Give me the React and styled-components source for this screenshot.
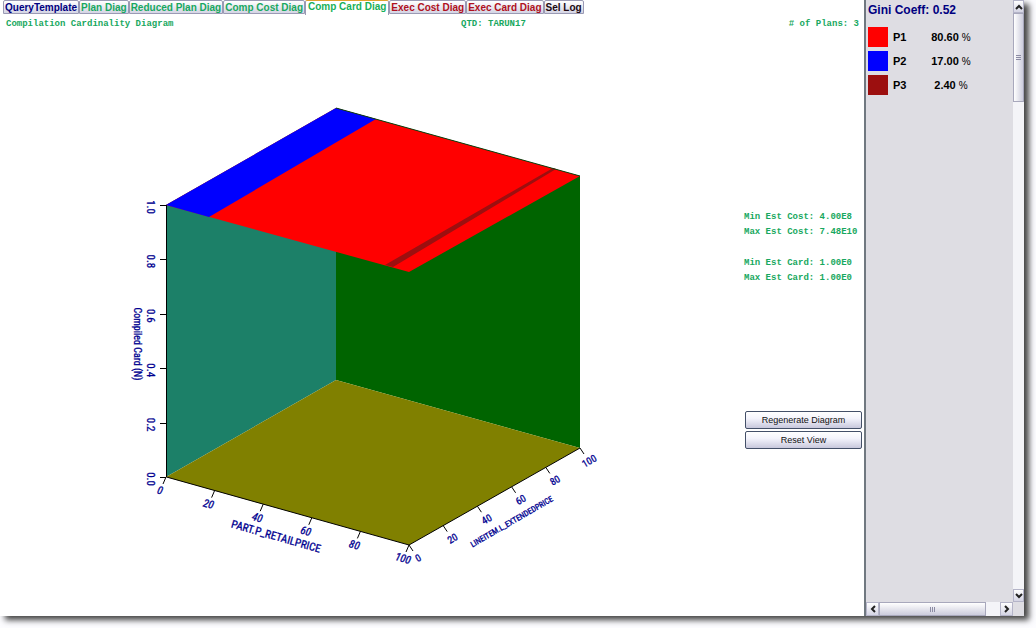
import React, { useState } from 'react';
import styled, { createGlobalStyle } from 'styled-components';

const tabs = [
  { label: 'QueryTemplate', color: '#000080' },
  { label: 'Plan Diag', color: '#18a860' },
  { label: 'Reduced Plan Diag', color: '#18a860' },
  { label: 'Comp Cost Diag', color: '#18a860' },
  { label: 'Comp Card Diag', color: '#18b058' },
  { label: 'Exec Cost Diag', color: '#b01020' },
  { label: 'Exec Card Diag', color: '#b01020' },
  { label: 'Sel Log', color: '#200810' },
];

const plans = [
  { name: 'P1', share: '80.60', color: '#ff0000' },
  { name: 'P2', share: '17.00', color: '#0000ff' },
  { name: 'P3', share: '2.40', color: '#9c0f0f' },
];

const heightTicks = ['1.0', '0.8', '0.6', '0.4', '0.2', '0.0'];
const floorTicks = ['0', '20', '40', '60', '80', '100'];

const Diagram = () => (
  <Plot viewBox="0 32 740 584" preserveAspectRatio="xMinYMin meet" role="img" aria-label="Compilation Cardinality Diagram">
    {/* walls and floor */}
    <polygon points="166,205 336,108 336,380 166,477" fill="#1c8068" />
    <polygon points="336,108 580,176 580,448 336,380" fill="#006400" />
    <polygon points="166,477 336,380 580,448 409,545" fill="#808000" />

    {/* plan regions on the top face */}
    <polygon points="166,205 336,108 580,176 409,272" fill="#ff0000" />
    <polygon points="166,205 336,108 376,119 209,217" fill="#0000ff" />
    <polygon points="385,265 553,168 556,169 458,228 393,267" fill="#9c0f0f" />
    <path d="M336 108L580 176" fill="none" stroke="#104010" strokeWidth="1" />

    <path d="M166.5 205V477L409 545L580 448" fill="none" stroke="#000" strokeWidth="1" />

    {heightTicks.map((label, i) => {
      const y = 205 + i * 54.4;
      return (
        <g key={label}>
          <path d={`M160 ${Math.round(y) + 0.5}h6`} stroke="#000" />
          <AxisText $size={11} transform={`translate(147 ${y + 2}) rotate(90)`}>{label}</AxisText>
        </g>
      );
    })}
    {floorTicks.map((label, i) => {
      const x = 166 + i * 48.6;
      const y = 477 + i * 13.6;
      return (
        <g key={label}>
          <path d={`M${x} ${y}l-3 7`} stroke="#000" />
          <AxisText $size={11} $slanted transform={`translate(${x - 7} ${y + 17}) rotate(16)`}>{label}</AxisText>
        </g>
      );
    })}
    {floorTicks.map((label, i) => {
      const x = 409 + i * 34.2;
      const y = 545 - i * 19.4;
      return (
        <g key={label}>
          <path d={`M${x} ${y}l4 6`} stroke="#000" />
          <AxisText $size={10} transform={`translate(${x + 11} ${y + 16}) rotate(-30)`}>{label}</AxisText>
        </g>
      );
    })}

    <AxisText $size={10} transform="translate(134 344) rotate(90)">Compiled Card (N)</AxisText>
    <AxisText $size={11} transform="translate(275 540) rotate(16)">PART.P_RETAILPRICE</AxisText>
    <AxisText $size={8} transform="translate(513 524) rotate(-30)">LINEITEM.L_EXTENDEDPRICE</AxisText>
  </Plot>
);

const Arrow = ({ turn }) => (
  <svg width="8" height="8" viewBox="0 0 8 8" aria-hidden="true">
    <path d="M1 6L4 3L7 6" fill="none" stroke="#222" strokeWidth="2" transform={`rotate(${turn} 4 4)`} />
  </svg>
);

const App = () => {
  const [active, setActive] = useState('Comp Card Diag');

  return (
    <Page>
      <GlobalStyle />
      <Frame>
        <Main>
          <TabBar role="tablist">
            {tabs.map(({ label, color }) => (
              <Tab
                key={label}
                role="tab"
                aria-selected={active === label}
                $active={active === label}
                $color={color}
                onClick={() => setActive(label)}
              >
                {label}
              </Tab>
            ))}
          </TabBar>
          <Caption>
            <span>Compilation Cardinality Diagram</span>
            <span>QTD: TARUN17</span>
            <span># of Plans: 3</span>
          </Caption>
          <Workspace>
            <Diagram />
            <Info>
              <Stats>
                <p>Min Est Cost: 4.00E8</p>
                <p>Max Est Cost: 7.48E10</p>
              </Stats>
              <Stats>
                <p>Min Est Card: 1.00E0</p>
                <p>Max Est Card: 1.00E0</p>
              </Stats>
              <Actions>
                <ActionButton>Regenerate Diagram</ActionButton>
                <ActionButton>Reset View</ActionButton>
              </Actions>
            </Info>
          </Workspace>
        </Main>

        <Side>
          <Legend>
            <Gini>Gini Coeff: 0.52</Gini>
            <PlanTable>
              <tbody>
                {plans.map(({ name, share, color }) => (
                  <tr key={name}>
                    <td><Swatch $color={color} /></td>
                    <th scope="row">{name}</th>
                    <td>{share} <Percent>%</Percent></td>
                  </tr>
                ))}
              </tbody>
            </PlanTable>
          </Legend>
          <VerticalBar>
            <ScrollButton aria-label="Scroll up"><Arrow turn={0} /></ScrollButton>
            <Thumb><Grip /></Thumb>
            <Track />
            <ScrollButton aria-label="Scroll down"><Arrow turn={180} /></ScrollButton>
          </VerticalBar>
          <HorizontalBar>
            <ScrollButton aria-label="Scroll left"><Arrow turn={-90} /></ScrollButton>
            <Thumb $horizontal><Grip $horizontal /></Thumb>
            <Track />
            <ScrollButton aria-label="Scroll right"><Arrow turn={90} /></ScrollButton>
          </HorizontalBar>
        </Side>
      </Frame>
    </Page>
  );
};

const GlobalStyle = createGlobalStyle`
  * {
    box-sizing: border-box;
  }

  body {
    margin: 0;
    background: #fff;
    font-family: 'Liberation Sans', Arial, sans-serif;
  }

  p {
    margin: 0;
  }

  button {
    font-family: inherit;
    padding: 0;
  }
`;

const Page = styled.div`
  height: 100vh;
  padding: 0 12px 12px 0;
  overflow: hidden;
  background: #fcfcff;
`;

const Frame = styled.div`
  display: flex;
  height: 100%;
  background: #fff;
  box-shadow: 5px 4px 6px #444;
`;

const Main = styled.main`
  flex: 1;
  min-width: 0;
  display: flex;
  flex-direction: column;
`;

const TabBar = styled.div`
  display: flex;
  align-items: flex-start;
  height: 15px;
  padding-left: 3px;
`;

const Tab = styled.button`
  height: ${({ $active }) => ($active ? '15px' : '14px')};
  padding: ${({ $active }) => ($active ? '0 2px 2px' : '1px 1px 0')};
  border: 1px solid #9a9ab4;
  border-top-color: ${({ $active }) => ($active ? '#e0a030' : '#9a9ab4')};
  border-bottom-width: ${({ $active }) => ($active ? '0' : '1px')};
  border-radius: 2px 2px 0 0;
  background: ${({ $active }) => ($active ? '#fff' : 'linear-gradient(#fff, #d4d4e4)')};
  color: ${({ $color }) => $color};
  font-size: 10px;
  font-weight: 700;
  line-height: 12px;
  white-space: nowrap;
`;

const Caption = styled.div`
  display: grid;
  grid-template-columns: 455px 1fr auto;
  height: 17px;
  padding: 0 5px 0 6px;
  color: #18a860;
  font-family: 'Liberation Mono', 'Courier New', monospace;
  font-size: 9px;
  font-weight: 700;
  line-height: 18px;
`;

const Workspace = styled.div`
  flex: 1;
  min-height: 0;
  display: flex;
`;

const Plot = styled.svg`
  flex: 1;
  min-width: 0;
  height: 100%;
`;

const AxisText = styled.text`
  fill: #000090;
  font-family: 'Roboto Condensed', 'Liberation Sans', sans-serif;
  font-size: ${({ $size }) => $size}px;
  font-style: ${({ $slanted }) => ($slanted ? 'italic' : 'normal')};
  font-weight: 400;
  stroke: #000090;
  stroke-width: 0.3px;
  text-anchor: middle;
`;

const Info = styled.div`
  width: 124px;
  padding: 178px 2px 0 4px;
`;

const Stats = styled.div`
  margin-bottom: 16px;
  color: #18a860;
  font-family: 'Liberation Mono', 'Courier New', monospace;
  font-size: 9px;
  font-weight: 700;
  line-height: 15px;
  white-space: nowrap;
`;

const Actions = styled.div`
  display: flex;
  flex-direction: column;
  gap: 2px;
  padding: 109px 0 0 1px;
`;

const ActionButton = styled.button`
  height: 18px;
  border: 1px solid #445068;
  border-radius: 2px;
  background: linear-gradient(#fff, #f4f4fc 40%, #c8c8dc);
  color: #111;
  font-size: 9px;
  line-height: 16px;
`;

const Side = styled.aside`
  width: 160px;
  display: grid;
  grid-template-columns: 1fr 11px;
  grid-template-rows: 1fr 14px;
  border-left: 2px solid #707880;
  background: #dedde3;
`;

const Legend = styled.section`
  padding: 4px 2px;
`;

const Gini = styled.h2`
  margin: 0 0 9px;
  color: #000080;
  font-size: 12px;
  line-height: 12px;
`;

const PlanTable = styled.table`
  border-collapse: collapse;
  font-size: 11px;
  font-weight: 700;

  td,
  th {
    height: 24px;
    padding: 0;
  }

  th {
    width: 38px;
    padding-left: 5px;
    text-align: left;
  }

  td:last-child {
    width: 50px;
    text-align: center;
  }
`;

const Swatch = styled.div`
  width: 20px;
  height: 20px;
  background: ${({ $color }) => $color};
`;

const Percent = styled.span`
  font-size: 10px;
  font-weight: 400;
`;

const VerticalBar = styled.div`
  display: flex;
  flex-direction: column;
  background: #f4f4f8;
`;

const HorizontalBar = styled.div`
  display: flex;
  background: #f4f4f8;
`;

const ScrollButton = styled.button`
  display: flex;
  align-items: center;
  justify-content: center;
  flex: 0 0 13px;
  border: 1px solid #b4b4c8;
  background: linear-gradient(#fff, #d4d4e4);
`;

const Thumb = styled.div`
  display: flex;
  align-items: center;
  justify-content: center;
  flex: 0 0 ${({ $horizontal }) => ($horizontal ? '107px' : '89px')};
  border: 1px solid #a8a8bc;
  background: linear-gradient(${({ $horizontal }) => ($horizontal ? '180deg' : '90deg')}, #fff, #ccccdc);
`;

const Grip = styled.span`
  width: 5px;
  height: 5px;
  background: repeating-linear-gradient(
    ${({ $horizontal }) => ($horizontal ? '90deg' : '180deg')},
    #8c8ca4 0 1px,
    transparent 1px 2px
  );
`;

const Track = styled.div`
  flex: 1;
`;

export default App;
